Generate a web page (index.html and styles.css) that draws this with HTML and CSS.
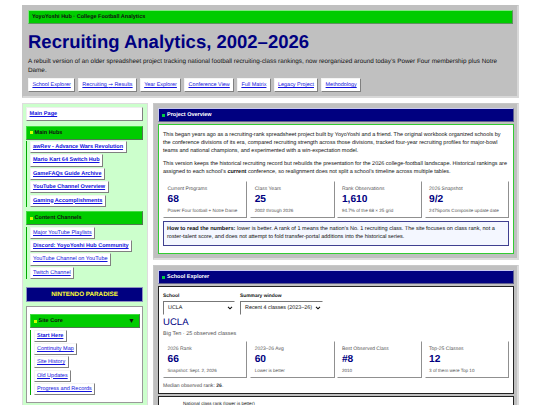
FILE: index.html
```html
<!DOCTYPE html>
<html lang="en">
<head>
    <meta charset="UTF-8">
    <meta name="viewport" content="width=device-width, initial-scale=1.0">
    <title>Recruiting Analytics, 2002–2026</title>
    <link rel="stylesheet" href="styles.css">
</head>
<body>

<header class="site-header">
    <div class="top-bar">YoyoYoshi Hub · College Football Analytics</div>
    <h1>Recruiting Analytics, 2002–2026</h1>
    <p class="intro">A rebuilt version of an older spreadsheet project tracking national football recruiting-class rankings, now reorganized around today’s Power Four membership plus Notre Dame.</p>
    <nav class="top-nav">
        <a href="#explorer">School Explorer</a>
        <a href="#results">Recruiting <span class="to">→</span> Results</a>
        <a href="#year">Year Explorer</a>
        <a href="#conference">Conference View</a>
        <a href="#matrix">Full Matrix</a>
        <a href="#legacy">Legacy Project</a>
        <a href="#methodology">Methodology</a>
    </nav>
</header>

<div class="layout">
    <aside class="sidebar">
        <a class="main-link" href="#">Main Page</a>

        <h2 class="side-title">Main Hubs</h2>
        <ul class="side-list bold">
            <li><a href="#">awRev - Advance Wars Revolution</a></li>
            <li><a href="#">Mario Kart 64 Switch Hub</a></li>
            <li><a href="#">GameFAQs Guide Archive</a></li>
            <li><a href="#">YouTube Channel Overview</a></li>
            <li><a href="#">Gaming Accomplishments</a></li>
        </ul>

        <h2 class="side-title">Content Channels</h2>
        <ul class="side-list">
            <li><a href="#">Major YouTube Playlists</a></li>
            <li><a href="#"><b>Discord: YoyoYoshi Hub Community</b></a></li>
            <li><a href="#">YouTube Channel on YouTube</a></li>
            <li><a href="#">Twitch Channel</a></li>
        </ul>

        <div class="paradise">NINTENDO PARADISE</div>

        <div class="side-box">
            <h2 class="side-title">Site Core <span class="arrow">▼</span></h2>
            <ul class="side-list">
                <li><a href="#"><b>Start Here</b></a></li>
                <li><a href="#">Continuity Map</a></li>
                <li><a href="#">Site History</a></li>
                <li><a href="#">Old Updates</a></li>
                <li><a href="#">Progress and Records</a></li>
            </ul>
        </div>
    </aside>

    <main class="content">
        <section class="panel">
            <h2 class="panel-title">Project Overview</h2>
            <div class="panel-body overview">
                <p>This began years ago as a recruiting-rank spreadsheet project built by YoyoYoshi and a friend. The original workbook organized schools by the conference divisions of its era, compared recruiting strength across those divisions, tracked four-year recruiting profiles for major-bowl teams and national champions, and experimented with a win-expectation model.</p>
                <p>This version keeps the historical recruiting record but rebuilds the presentation for the 2026 college-football landscape. Historical rankings are assigned to each school’s <b>current</b> conference, so realignment does not split a school’s timeline across multiple tables.</p>
                <div class="stats">
                    <div class="stat"><span>Current Programs</span><strong>68</strong><small>Power Four football + Notre Dame</small></div>
                    <div class="stat"><span>Class Years</span><strong>25</strong><small>2002 through 2026</small></div>
                    <div class="stat"><span>Rank Observations</span><strong>1,610</strong><small>94.7% of the 68 × 25 grid</small></div>
                    <div class="stat"><span>2026 Snapshot</span><strong>9/2</strong><small>247Sports Composite update date</small></div>
                </div>
                <div class="note"><b>How to read the numbers:</b> lower is better. A rank of 1 means the nation’s No. 1 recruiting class. The site focuses on class rank, not a roster-talent score, and does not attempt to fold transfer-portal additions into the historical series.</div>
            </div>
        </section>

        <section class="panel" id="explorer">
            <h2 class="panel-title">School Explorer</h2>
            <div class="panel-body school">
                <div class="controls">
                    <div class="control school-control">
                        <label>School</label>
                        <div class="select">UCLA
                            <svg viewBox="0 0 6 4"><path d="M1 .8 3 2.8 5 .8"/></svg>
                        </div>
                    </div>
                    <div class="control window-control">
                        <label>Summary window</label>
                        <div class="select">Recent 4 classes (2023–26)
                            <svg viewBox="0 0 6 4"><path d="M1 .8 3 2.8 5 .8"/></svg>
                        </div>
                    </div>
                </div>
                <h3>UCLA</h3>
                <p class="meta">Big Ten · 25 observed classes</p>
                <div class="stats">
                    <div class="stat"><span>2026 Rank</span><strong>66</strong><small>Snapshot: Sept. 2, 2026</small></div>
                    <div class="stat"><span>2023–26 Avg</span><strong>60</strong><small>Lower is better</small></div>
                    <div class="stat"><span>Best Observed Class</span><strong>#8</strong><small>2010</small></div>
                    <div class="stat"><span>Top-25 Classes</span><strong>12</strong><small>3 of them were Top 10</small></div>
                </div>
                <p class="median">Median observed rank: <b>26</b>.</p>
            </div>
            <div class="panel-body chart">National class rank (lower is better)</div>
        </section>
    </main>
</div>

</body>
</html>
```
FILE: styles.css
```css
* {
    box-sizing: border-box;
    margin: 0;
    padding: 0;
}

body {
    width: 540px;
    height: 405px;
    overflow: hidden;
    padding: 5px 21px 0 22px;
    background: #fff;
    color: #111;
    font-family: "Liberation Sans", Arial, sans-serif;
    font-size: 6px;
    text-rendering: geometricPrecision;
}

a {
    color: #1111dd;
    text-decoration: underline;
}

/* Header */
.site-header {
    height: 93px;
    padding: 5px 4px 5px 5px;
    background: #c0c0c0;
    border: 1px solid #c0c0c0;
    border-right: 2px solid #d8d8d8;
    border-bottom: 2px solid #d8d8d8;
}

.top-bar {
    height: 14px;
    margin-top: -1px;
    padding-left: 3px;
    background: #00cc00;
    border: 1px solid #80e680;
    border-right-color: #609060;
    border-bottom-color: #609060;
    font-size: 5.5px;
    font-weight: bold;
    line-height: 12.5px;
}

h1 {
    margin-top: 6.5px;
    color: #000080;
    font-size: 18.5px;
    line-height: 22px;
}

.intro {
    margin-top: 4.5px;
    font-size: 6.33px;
    line-height: 9px;
}

.top-nav {
    display: flex;
    gap: 2.8px;
    margin-top: 3px;
}

.top-nav a {
    height: 14px;
    padding: 0 3.4px;
    background: #fff;
    border: 1px solid #f4f4f4;
    border-right-color: #808080;
    border-bottom-color: #808080;
    font-size: 5.44px;
    line-height: 13px;
    white-space: nowrap;
}

.to {
    font-family: "DejaVu Sans", sans-serif;
}

.layout {
    display: grid;
    grid-template-columns: 126px 366px;
    justify-content: space-between;
    margin-top: 5px;
}

/* Sidebar */
.sidebar {
    height: 310px;
    padding: 3px 4px 3px 3px;
    background: #ccffcc;
    border: 1px solid #ddd;
}

.main-link {
    display: block;
    height: 14px;
    padding-left: 2.5px;
    background: #fff;
    border: 1px solid #eee;
    border-right-color: #808080;
    border-bottom-color: #808080;
    font-size: 5.6px;
    font-weight: bold;
    line-height: 12px;
}

.side-title {
    display: flex;
    align-items: center;
    height: 14px;
    margin-top: 4.5px;
    padding: 0 4px 0 3px;
    background: #00cc00;
    border: 1px solid #40dd40;
    border-right-color: #507850;
    border-bottom-color: #507850;
    font-size: 5.5px;
}

.side-title::before {
    content: "";
    width: 3px;
    height: 3px;
    margin-right: 1.6px;
    background: #ccff00;
}

.arrow {
    margin-left: auto;
    font-size: 7px;
}

.side-list {
    display: flex;
    flex-direction: column;
    gap: 1.2px;
    margin-top: 1.5px;
    padding-left: 2.5px;
    border-left: 1px solid #00aa00;
    list-style: none;
}

.side-list li {
    height: 12.2px;
}

.side-list a {
    display: inline-block;
    height: 12.2px;
    padding: 0 2.5px;
    background: #fff;
    border: 1px solid #f4f4f4;
    border-right-color: #808080;
    border-bottom-color: #808080;
    font-size: 5.53px;
    line-height: 11px;
    vertical-align: top;
    white-space: nowrap;
}

.bold a {
    font-weight: bold;
}

.paradise {
    height: 15px;
    margin-top: 8px;
    background: #000080;
    border: 1px solid #9090c0;
    color: #ffff33;
    font-size: 6.3px;
    font-weight: bold;
    line-height: 14px;
    text-align: center;
}

.side-box {
    height: 97px;
    margin-top: 3.5px;
    padding: 3px 2px 0 3px;
    background: #fff;
    border: 1px solid #999;
}

/* Panels */
.content {
    display: flex;
    flex-direction: column;
    gap: 5px;
}

.panel {
    height: 157px;
    padding: 4px 3px 0 4px;
    background: #c0c0c0;
    border: 1px solid #c8c8c8;
    border-right: 2px solid #dcdcdc;
    border-bottom: 2px solid #dcdcdc;
}

.panel-title {
    display: flex;
    align-items: center;
    height: 14px;
    padding-left: 3px;
    background: #000080;
    border: 1px solid #c8c8f0;
    border-right-color: #606090;
    border-bottom-color: #606090;
    color: #fff;
    font-size: 5.5px;
}

.panel-title::before {
    content: "";
    width: 3px;
    height: 3px;
    margin-right: 2px;
    background: #00cc44;
}

.panel-body {
    margin-top: 2px;
    padding: 4px;
    background: #fff;
    border: 1px solid #222;
}

.overview {
    height: 130px;
    padding-top: 5.5px;
    border-color: #33cc33;
}

.overview p {
    margin-bottom: 5px;
    font-size: 5.5px;
    line-height: 8px;
}

.stats {
    display: grid;
    grid-template-columns: repeat(4, 1fr);
    gap: 2.8px;
}

.stat {
    display: flex;
    flex-direction: column;
    min-width: 0;
    height: 37px;
    padding: 4px 3.5px 0;
    border: 1px solid #fff;
    border-right-color: #909090;
    border-bottom-color: #909090;
    color: #555;
    font-size: 5px;
    line-height: 7px;
}

.stat strong {
    color: #000080;
    font-size: 10.2px;
    line-height: 14px;
}

.stat small {
    font-size: 4.6px;
    line-height: 8px;
    white-space: nowrap;
}

.note {
    height: 25px;
    margin-top: 3.5px;
    padding: 3px;
    background: #f4f7ff;
    border: 1px solid #404090;
    font-size: 5.55px;
    line-height: 8px;
}

#explorer {
    height: 180px;
}

.school {
    height: 108px;
    padding-top: 5.5px;
}

.controls {
    display: flex;
    gap: 5px;
}

.school-control {
    width: 72px;
}

.window-control {
    width: 83px;
}

.control label {
    display: block;
    height: 8.5px;
    font-size: 4.9px;
    font-weight: bold;
    line-height: 8px;
}

.select {
    display: flex;
    align-items: center;
    justify-content: space-between;
    height: 14px;
    padding: 0 1px 0 4px;
    border: 1px solid #fff;
    border-top-color: #777;
    border-left-color: #777;
    font-size: 5.4px;
    white-space: nowrap;
}

.select svg {
    flex: none;
    width: 6px;
    height: 4px;
    fill: none;
    stroke: #111;
    stroke-width: 1.1;
}

h3 {
    margin-top: .5px;
    color: #000080;
    font-size: 9.6px;
    font-weight: normal;
    line-height: 13px;
}

.meta {
    color: #555;
    font-size: 5.5px;
    line-height: 10px;
}

.school .stats {
    margin-top: 2.5px;
}

.median {
    margin-top: 3.5px;
    color: #444;
    font-size: 5.1px;
    line-height: 8px;
}

.chart {
    height: 40px;
    padding: 3px 24px;
    font-size: 4.6px;
    line-height: 7px;
}
```
